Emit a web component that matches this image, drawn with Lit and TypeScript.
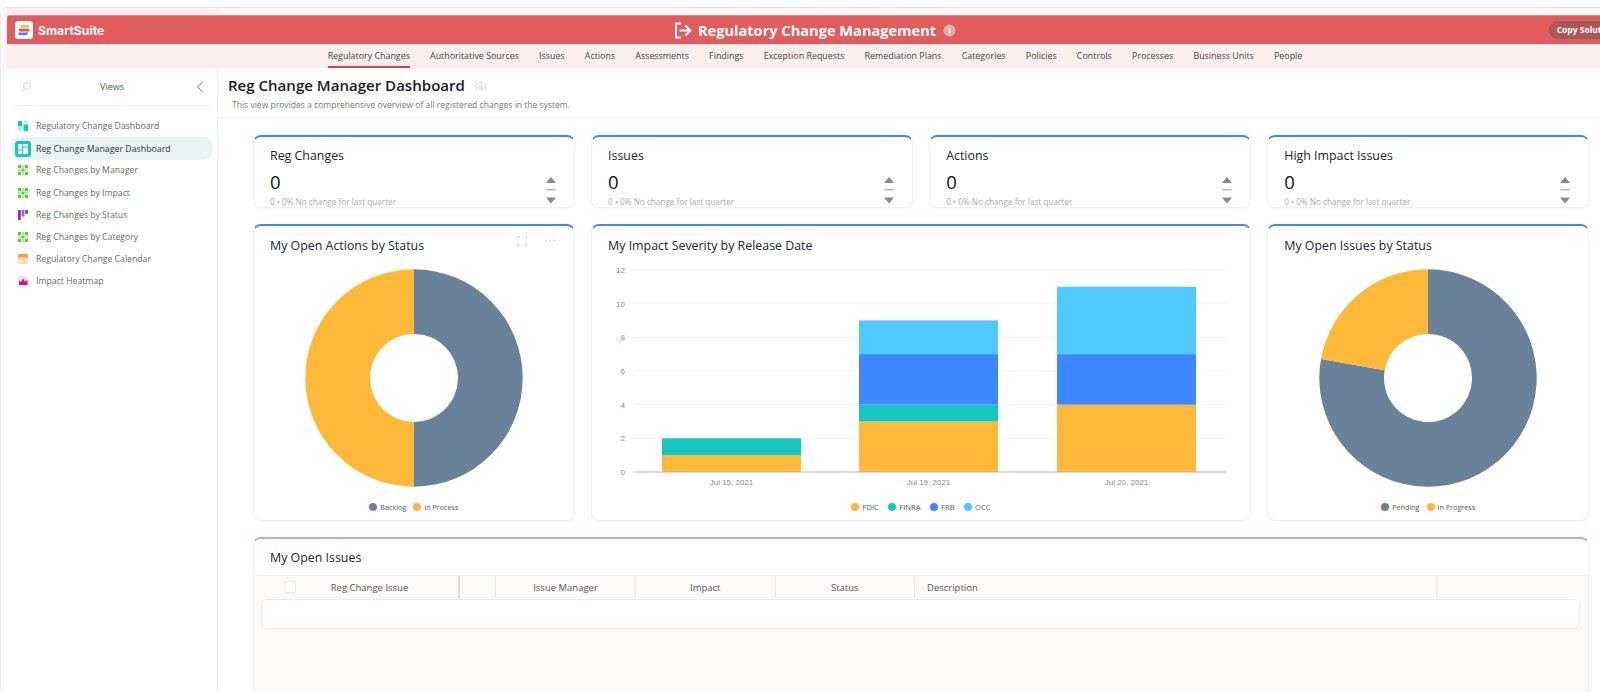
import { LitElement, html, css, svg } from "lit";
import { customElement } from "lit/decorators.js";

const C = { amber: "#ffb938", teal: "#17c5c1", blue: "#3d87ff", sky: "#4fc9ff", slate: "#6a8299" };
const NAV = ["Regulatory Changes","Authoritative Sources","Issues","Actions","Assessments","Findings","Exception Requests","Remediation Plans","Categories","Policies","Controls","Processes","Business Units","People"];
const METRICS = ["Reg Changes","Issues","Actions","High Impact Issues"];

function arc(cx:number, cy:number, r:number, ri:number, a0:number, a1:number) {
  const p = (rad:number, a:number) => { const t=(a-90)*Math.PI/180; return `${(cx+rad*Math.cos(t)).toFixed(2)} ${(cy+rad*Math.sin(t)).toFixed(2)}`; };
  const large = a1-a0>180?1:0;
  return `M${p(r,a0)}A${r} ${r} 0 ${large} 1 ${p(r,a1)}L${p(ri,a1)}A${ri} ${ri} 0 ${large} 0 ${p(ri,a0)}Z`;
}

const gridIcon = svg`<g fill="#5fc92e"><rect x="0" y="0" width="3" height="3"/><rect x="3.5" y="0" width="3" height="3" opacity=".45"/><rect x="7" y="0" width="3" height="3"/><rect x="0" y="3.5" width="3" height="3" opacity=".45"/><rect x="3.5" y="3.5" width="3" height="3"/><rect x="7" y="3.5" width="3" height="3" opacity=".45"/><rect x="0" y="7" width="3" height="3"/><rect x="3.5" y="7" width="3" height="3" opacity=".45"/><rect x="7" y="7" width="3" height="3"/></g>`;
const dashIcon = svg`<rect x="0" y="0" width="4" height="5.5" fill="#17c5c1"/><rect x="0" y="6.5" width="4" height="3.5" fill="#aeeceb"/><rect x="5.5" y="0" width="4.5" height="2.5" fill="#aeeceb"/><rect x="5.5" y="3.5" width="4.5" height="6.5" fill="#17c5c1"/>`;
const kanbanIcon = svg`<rect x="0" y="0" width="2.8" height="10" rx=".6" fill="#8a2bd6"/><rect x="3.6" y="0" width="2.8" height="6.5" rx=".6" fill="#a45be6"/><rect x="7.2" y="0" width="2.8" height="3.8" rx=".6" fill="#8a2bd6"/>`;
const calIcon = svg`<rect x="0" y="0" width="10" height="10" rx="1.5" fill="#ffd9b0"/><path d="M0 1.5A1.5 1.5 0 0 1 1.5 0h7A1.5 1.5 0 0 1 10 1.5V3.5H0Z" fill="#ff9a3d"/><rect x="1.5" y="5.5" width="2.5" height="2.5" fill="#fff"/>`;
const heatIcon = svg`<rect x="0" y="0" width="10" height="10" fill="#fbe3ee"/><path d="M1 9V4.5L3 6 5 2.5 7 5.5 9.5 4V9Z" fill="#d6157f"/>`;

const VIEWS: [string, any][] = [
  ["Regulatory Change Dashboard", dashIcon],
  ["Reg Change Manager Dashboard", null],
  ["Reg Changes by Manager", gridIcon],
  ["Reg Changes by Impact", gridIcon],
  ["Reg Changes by Status", kanbanIcon],
  ["Reg Changes by Category", gridIcon],
  ["Regulatory Change Calendar", calIcon],
  ["Impact Heatmap", heatIcon],
];

const BARS: [number, [string, number][], string][] = [
  [70, [[C.amber,1],[C.teal,1]], "Jul 15, 2021"],
  [267, [[C.amber,3],[C.teal,1],[C.blue,3],[C.sky,2]], "Jul 19, 2021"],
  [465, [[C.amber,4],[C.blue,3],[C.sky,4]], "Jul 20, 2021"],
];

@customElement("app-root")
export class AppRoot extends LitElement {
  static styles = css`
    :host { display:block; width:1600px; height:692px; overflow:hidden; background:#fff; font-family:"Open Sans","Noto Sans",sans-serif; }
    .shell { margin-top:7px; width:1623px; height:685px; box-sizing:border-box; padding-left:7px; background:#f9f9f9; border-top:1px solid #e6e6e6; border-left:1px solid #eee; border-radius:7px 0 0 0; }
    .frame { width:1616px; margin-left:-1px; }
    .strip { display:flex; height:7px; background:#f9f9fb; }
    .strip i { display:block; width:211px; background:#fbeeee; }
    .red { height:29px; background:#e05c5d; border-top:1px solid #e88; border-radius:3px 0 0 0; box-sizing:border-box; display:grid; grid-template-columns:1fr auto 1fr; align-items:center; color:#fff; }
    .brand { display:flex; align-items:center; gap:5px; padding-left:8px; font:700 12.2px "Inter","Open Sans",sans-serif; }
    .title { display:flex; align-items:center; gap:5px; font-weight:700; font-size:14.6px; white-space:nowrap; }
    .actions { display:flex; justify-content:flex-end; }
    .copy { background:#a9585a; border-radius:10px; font-size:8.5px; font-weight:700; height:18px; padding:0 8px; line-height:18px; white-space:nowrap; }
    .nav { height:24px; background:#fbeeee; display:flex; justify-content:center; gap:20.2px; font-size:8.9px; color:#444; }
    .nav span { line-height:23px; height:24px; box-sizing:border-box; white-space:nowrap; }
    .nav .on { border-bottom:2px solid #e03e3e; }
    .body { display:flex; height:625px; }
    .side { width:211px; flex:none; background:#fff; border-right:1px solid #f6eeee; border-radius:8px 0 0 0; box-sizing:border-box; padding:0 5px; }
    .vhead { display:grid; grid-template-columns:1fr auto 1fr; align-items:center; height:37px; margin:0 3px; padding:0 5px; border-bottom:1px solid #efefef; font-size:9px; color:#555; }
    .vhead .chev { justify-self:end; display:block; }
    .vlist { padding-top:9px; display:flex; flex-direction:column; }
    .v { display:flex; align-items:center; height:22.2px; font-size:8.7px; color:#666; padding-left:6px; gap:8px; white-space:nowrap; }
    .v svg { flex:none; }
    .v.on { background:#e9f3f3; border-radius:8px; color:#333; padding-left:3px; gap:5px; height:23px; margin-bottom:-.8px; font-size:8.8px; }
    .tile { width:16px; height:16px; background:#17c5c1; border-radius:3px; display:flex; align-items:center; justify-content:center; flex:none; }
    .main { flex:1; min-width:0; background:#fff; }
    .mhead { height:50px; border-bottom:1px solid #eee; padding:5px 0 0 10px; box-sizing:border-box; }
    .mhead h1 { margin:0; font-size:15.05px; font-weight:600; color:#1a1a24; line-height:24px; display:flex; align-items:center; gap:10px; }
    .mhead p { margin:2px 0 0 4px; font-size:8.56px; color:#777; line-height:12px; }
    .grid { display:grid; grid-template-columns:repeat(4,321.8px); gap:16px 16.3px; padding:17px 0 0 35px; }
    .card { background:#fff; border:1px solid #efefef; border-top:2px solid #3d87ff; border-radius:8px; box-sizing:border-box; box-shadow:0 1px 2px rgba(0,0,0,.03); position:relative; overflow:hidden; }
    .metric { height:73px; padding:10px 16px 0; display:flex; flex-direction:column; }
    .metric h3, .chart h3, .tcard h3 { margin:0; font-size:12.4px; font-weight:500; color:#22222e; line-height:18px; white-space:nowrap; }
    .num { font-size:18.5px; color:#111; line-height:26px; margin-top:4px; }
    .mini { font-size:8.2px; color:#aaa; line-height:10px; white-space:nowrap; margin-top:2px; }
    .trend { display:block; position:absolute; right:18px; top:40px; }
    .chart { height:296.5px; display:flex; flex-direction:column; }
    .chart h3 { padding:10.5px 16px 0; height:42px; box-sizing:border-box; flex:none; }
    .wide { grid-column:span 2; }
    .donut { display:block; margin:0 auto; flex:none; }
    .bars { display:block; flex:none; overflow:visible; }
    .legend { display:flex; justify-content:center; align-items:center; gap:7px; font-size:7.2px; color:#555; height:16px; margin:auto 0 4.5px; }
    .legend.spaced { gap:9.5px; font-size:7.6px; }
    .legend span { display:flex; align-items:center; gap:3px; }
    .legend i { display:block; width:8px; height:8px; border-radius:50%; }
    .tcard { grid-column:span 4; height:200px; border-top-color:#8fb6fb; }
    .tcard h3 { padding:10px 16px 0; height:37px; box-sizing:border-box; border-bottom:1px solid #f0efef; }
    .tbody { background:#fbfaf9; height:170px; }
    .thead { display:flex; height:23px; font-size:9.5px; color:#555; }
    .thead div { box-sizing:border-box; border-right:1px solid #efe8e6; display:flex; align-items:center; justify-content:center; position:relative; white-space:nowrap; }
    .thead .c0 { border-right:2px solid #e5dad8; padding-left:27px; }
    .thead .left { justify-content:flex-start; padding-left:12px; }
    .check { position:absolute; left:30px; top:5px; width:12px; height:12px; background:#fff; border:1px solid #e8e8ea; border-radius:2px; box-sizing:border-box; }
    .trow { margin:0 8px 0 7px; height:30px; background:#fff; border:1px solid #e8ecf6; border-radius:6px; box-sizing:border-box; }
    .tools { position:absolute; right:17px; top:10px; display:block; }
  `;

  private donut(parts: [string, number, number][]) {
    return html`<svg class="donut" width="220" height="220" viewBox="0 0 220 220">
      ${parts.map(([c, a, b]) => svg`<path d=${arc(110,110,108.7,44,a,b)} fill=${c}/>`)}
    </svg>`;
  }

  private legend(items: [string,string][], spaced = false) {
    return html`<div class="legend ${spaced ? "spaced" : ""}">${items.map(([c,t]) => html`<span><i style="background:${c}"></i>${t}</span>`)}</div>`;
  }

  private barChart() {
    const y0 = 204, u = 16.84;
    return html`<svg class="bars" width="658" height="230" viewBox="0 0 658 230">
      ${[2,4,6,8,10,12].map(n => svg`<line x1="42" x2="634" y1=${y0-n*u} y2=${y0-n*u} stroke="#f3f3f3"/>`)}
      ${[0,2,4,6,8,10,12].map(n => svg`<text x="33" y=${y0-n*u+3} text-anchor="end" font-size="8" font-family="Liberation Sans" fill="#8a8a8a">${n}</text>`)}
      ${BARS.map(([x, segs, label]) => {
        let acc = 0;
        return svg`${segs.map(([c, v]) => { acc += v; return svg`<rect x=${x} y=${y0-acc*u} width="139" height=${v*u} fill=${c}/>`; })}
          <text x=${x+69.5} y=${y0+13} text-anchor="middle" font-size="8" font-family="Liberation Sans" fill="#8a8a8a">${label}</text>`;
      })}
      <line x1="42" x2="634" y1=${y0} y2=${y0} stroke="#b5b5b5" stroke-width="1"/>
    </svg>`;
  }

  render() {
    return html`
      <div class="shell">
      <div class="frame">
        <div class="strip"><i></i></div>
        <div class="red">
          <div class="brand">
            <svg width="18" height="18" viewBox="0 0 18 18">
              <rect width="18" height="18" rx="3" fill="#fff"/>
              <path d="M5 6.2C5 4.8 6 4 7 4h7v2.6H5Z" fill="#ffb938"/>
              <path d="M4 7.8h9.5c1 0 1.2 1.5 1.2 2.6H4.5C4 10 4 8.8 4 7.8Z" fill="#f04e4e"/>
              <path d="M3.5 11.6H13c0 1.4-1 2.6-2.2 2.6H3.5Z" fill="#3d87ff"/>
            </svg>
            SmartSuite
          </div>
          <div class="title">
            <svg width="19" height="17" viewBox="0 0 19 17" fill="none" stroke="#fff" stroke-width="2">
              <path d="M7 1.5H2V15.5H7"/><path d="M5.5 8.5H16"/><path d="M11.5 3.5 16.5 8.5 11.5 13.5"/>
            </svg>
            Regulatory Change Management
            <svg width="13" height="13" viewBox="0 0 13 13" style="margin-left:2px">
              <circle cx="6.5" cy="6.5" r="6" fill="#edaaaa"/><rect x="5.8" y="3" width="1.5" height="1.5" fill="#fff"/><rect x="5.8" y="5.5" width="1.5" height="4.5" fill="#fff"/>
            </svg>
          </div>
          <div class="actions"><div class="copy">Copy Solution</div></div>
        </div>
        <div class="nav">${NAV.map((n,i) => html`<span class=${i===0?"on":""}>${n}</span>`)}</div>
        <div class="body">
          <aside class="side">
            <div class="vhead">
              <svg width="12" height="12" viewBox="0 0 12 12" fill="none" stroke="#d8d8d8"><circle cx="7" cy="5" r="3.5"/><path d="M4.5 7.5 1.5 10.5"/></svg>
              <span>Views</span>
              <svg class="chev" width="8" height="12" viewBox="0 0 8 12" fill="none" stroke="#666" stroke-width="1"><path d="M6.5 1 1.5 6 6.5 11"/></svg>
            </div>
            <div class="vlist">
              ${VIEWS.map(([t, ic]) => ic
                ? html`<div class="v"><svg width="10" height="10" viewBox="0 0 10 10">${ic}</svg>${t}</div>`
                : html`<div class="v on"><span class="tile"><svg width="10" height="10" viewBox="0 0 10 10"><rect width="4.2" height="5.5" fill="#fff"/><rect y="6.5" width="4.2" height="3.5" fill="#fff"/><rect x="5.2" width="4.8" height="2.5" fill="#fff"/><rect x="5.2" y="3.5" width="4.8" height="6.5" fill="#fff"/></svg></span>${t}</div>`)}
            </div>
          </aside>
          <main class="main">
            <div class="mhead">
              <h1>Reg Change Manager Dashboard
                <svg width="12" height="10" viewBox="0 0 12 10" fill="#e6e6e6"><circle cx="6" cy="2.5" r="2"/><rect x="3.5" y="5" width="5" height="5"/><circle cx="1.8" cy="4" r="1.3"/><rect x="0" y="6" width="2.8" height="4"/><circle cx="10.2" cy="4" r="1.3"/><rect x="9.2" y="6" width="2.8" height="4"/></svg>
              </h1>
              <p>This view provides a comprehensive overview of all registered changes in the system.</p>
            </div>
            <div class="grid">
              ${METRICS.map(m => html`<div class="card metric">
                <h3>${m}</h3>
                <div class="num">0</div>
                <div class="mini">0 • 0% No change for last quarter</div>
                <svg class="trend" width="10" height="27" viewBox="0 0 10 27" fill="#8a8a8a"><path d="M5 0 10 6H0Z"/><rect x="0.5" y="12" width="9" height="1.5" fill="#b5b5b5"/><path d="M0 20.5H10L5 26.5Z"/></svg>
              </div>`)}
              <div class="card chart">
                <h3>My Open Actions by Status</h3>
                <svg class="tools" width="40" height="10" viewBox="0 0 40 10" fill="none" stroke="#dedede"><path d="M.5 3V.5H3M7 .5H9.5V3M9.5 7V9.5H7M3 9.5H.5V7"/><g fill="#d5d5d5" stroke="none"><circle cx="29" cy="4.5" r="1"/><circle cx="33" cy="4.5" r="1"/><circle cx="37" cy="4.5" r="1"/></g></svg>
                ${this.donut([[C.slate,0,180],[C.amber,180,360]])}
                ${this.legend([[C.slate,"Backlog"],[C.amber,"In Process"]])}
              </div>
              <div class="card chart wide">
                <h3>My Impact Severity by Release Date</h3>
                ${this.barChart()}
                ${this.legend([[C.amber,"FDIC"],[C.teal,"FINRA"],[C.blue,"FRB"],[C.sky,"OCC"]], true)}
              </div>
              <div class="card chart">
                <h3>My Open Issues by Status</h3>
                ${this.donut([[C.slate,0,280],[C.amber,280,360]])}
                ${this.legend([[C.slate,"Pending"],[C.amber,"In Progress"]])}
              </div>
              <div class="card tcard">
                <h3>My Open Issues</h3>
                <div class="tbody">
                  <div class="thead">
                    <div class="c0" style="width:206px"><span class="check"></span>Reg Change Issue</div>
                    <div style="width:36px"></div>
                    <div style="width:140px">Issue Manager</div>
                    <div style="width:139.5px">Impact</div>
                    <div style="width:139.5px">Status</div>
                    <div class="left" style="width:522px">Description</div>
                  </div>
                  <div class="trow"></div>
                </div>
              </div>
            </div>
          </main>
        </div>
      </div>
      </div>
    `;
  }
}
